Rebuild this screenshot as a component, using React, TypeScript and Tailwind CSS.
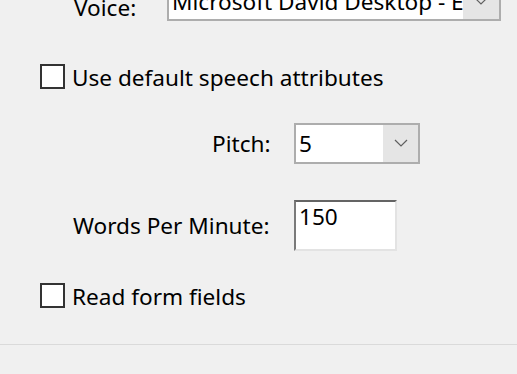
import React from "react";

function Chevron() {
  return (
    <svg width="14" height="8" viewBox="0 0 14 8" fill="none" stroke="#5f5f5f" strokeWidth="1.2">
      <path d="M1 1 L7 7 L13 1" />
    </svg>
  );
}

function Checkbox({ label }: { label: string }) {
  return (
    <div className="flex items-center ml-[40px]">
      <div className="w-[25px] h-[25px] border-2 border-[#333333] bg-white" />
      <span className="ml-[7px] leading-none pt-[3px]">{label}</span>
    </div>
  );
}

export default function App() {
  return (
    <div
      className="w-[517px] h-[374px] bg-[#f0f0f0] overflow-hidden text-[22.6px] text-[#000000]"
      style={{ fontFamily: '"Noto Sans", sans-serif' }}
    >
      {/* voice row (cut off at top) */}
      <div className="flex items-center mt-[-20px] h-[41px]">
        <span className="ml-[74px] w-[93px] leading-none pt-[16px]">Voice:</span>
        <div className="flex w-[334px] h-[41px] border-2 border-[#adadad] bg-[#e5e5e5]">
          <div className="w-[294px] bg-white overflow-hidden whitespace-nowrap flex items-center pl-[3px] pt-[4px] leading-none">
            Microsoft David Desktop - English (United States)
          </div>
          <div className="flex-1 flex items-center justify-center">
            <Chevron />
          </div>
        </div>
      </div>

      <div className="mt-[43px]">
        <Checkbox label="Use default speech attributes" />
      </div>

      <div className="flex items-center mt-[33px] h-[41px]">
        <span className="ml-[212px] w-[82px] leading-none pt-[3px]">Pitch:</span>
        <div className="flex w-[126px] h-[41px] border-2 border-[#adadad] bg-[#e5e5e5]">
          <div className="w-[87px] bg-white flex items-center pl-[3px] pt-[2px] leading-none">5</div>
          <div className="flex-1 flex items-center justify-center">
            <Chevron />
          </div>
        </div>
      </div>

      <div className="flex items-center mt-[36px] h-[51px]">
        <span className="ml-[73px] w-[221px] leading-none pt-[3px]">Words Per Minute:</span>
        <div className="w-[103px] h-[51px] bg-white border-t-2 border-l-2 border-r-2 border-b-2 border-t-[#646464] border-l-[#7a7a7a] border-r-[#e3e3e3] border-b-[#e3e3e3] pl-[3px] pt-[4px] leading-none">
          150
        </div>
      </div>

      <div className="mt-[32px]">
        <Checkbox label="Read form fields" />
      </div>

      <div className="mt-[36px] h-px bg-[#dadada]" />
    </div>
  );
}
